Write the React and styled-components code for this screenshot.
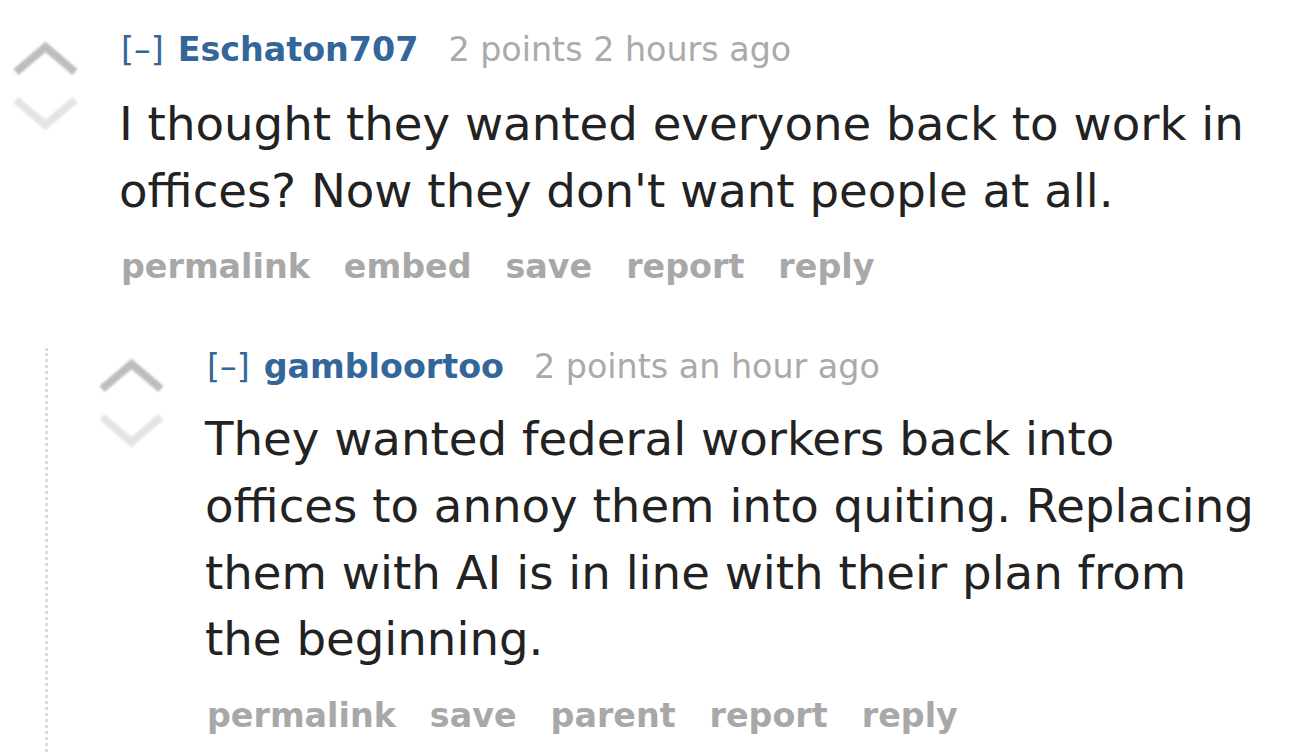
import styled, { createGlobalStyle } from 'styled-components';

const GlobalStyle = createGlobalStyle`
    body {
        margin: 0;
        background: #ffffff;
        font-family: "DejaVu Sans", Verdana, sans-serif;
    }
`;

const Page = styled.div`
    padding: 31px 30px 0 0;
    height: 754px;
    box-sizing: border-box;
    overflow: hidden;
`;

const CommentRow = styled.div`
    display: flex;
    align-items: flex-start;
    margin-left: ${({ indent }) => indent}px;
`;

const Midcol = styled.div`
    width: 72px;
    flex-shrink: 0;
    margin-right: 37px;
`;

const Entry = styled.div`
    flex: 1;
    min-width: 0;
`;

const Tagline = styled.div`
    display: flex;
    align-items: baseline;
    font-size: 33.33px;
    line-height: 38px;
    color: #aaaaaa;
    white-space: nowrap;
`;

const Expand = styled.span`
    color: #369;
    margin: 0 14px 0 2px;
`;

const Author = styled.span`
    color: #369;
    font-weight: bold;
    margin-right: 30px;
`;

const Body = styled.p`
    margin: ${({ tight }) => (tight ? 20 : 22)}px 0 0;
    font-size: 46.67px;
    line-height: 66.67px;
    color: #222222;
`;

const Buttons = styled.ul`
    display: flex;
    gap: 34px;
    list-style: none;
    margin: 24px 0 0;
    padding: 0 0 0 2px;
    font-size: 33.33px;
    line-height: 38px;
    font-weight: bold;
    color: #a8a8a8;
`;

const Child = styled.div`
    margin: 62px 0 0 45px;
    border-left: 3px dotted #dddddd;
    padding-bottom: 40px;
`;

const Arrows = () => (
    <svg width="72" height="104" viewBox="0 0 72 104">
        <defs>
            <filter id="soft" x="-10%" y="-10%" width="120%" height="120%">
                <feGaussianBlur stdDeviation="1" />
            </filter>
        </defs>
        <g filter="url(#soft)" fill="none" strokeWidth="8" strokeLinejoin="miter">
            <polyline points="6,41 35.5,16 65,41" stroke="#bdbdbd" />
            <polyline points="6,69 35.5,94 65,69" stroke="#e4e4e4" />
        </g>
    </svg>
);

const Comment = ({ indent, tight, author, score, text, buttons, children }) => (
    <>
        <CommentRow indent={indent}>
            <Midcol>
                <Arrows />
            </Midcol>
            <Entry>
                <Tagline>
                    <Expand>[–]</Expand>
                    <Author>{author}</Author>
                    <span>{score}</span>
                </Tagline>
                <Body tight={tight}>{text}</Body>
                <Buttons>
                    {buttons.map((b) => <li key={b}>{b}</li>)}
                </Buttons>
            </Entry>
        </CommentRow>
        {children}
    </>
);

const App = () => (
    <>
        <GlobalStyle />
        <Page>
            <Comment
                indent={10}
                author="Eschaton707"
                score="2 points 2 hours ago"
                text="I thought they wanted everyone back to work in offices? Now they don't want people at all."
                buttons={['permalink', 'embed', 'save', 'report', 'reply']}
            >
                <Child>
                    <Comment
                        indent={48}
                        tight
                        author="gambloortoo"
                        score="2 points an hour ago"
                        text="They wanted federal workers back into offices to annoy them into quiting. Replacing them with AI is in line with their plan from the beginning."
                        buttons={['permalink', 'save', 'parent', 'report', 'reply']}
                    />
                </Child>
            </Comment>
        </Page>
    </>
);

export default App;
